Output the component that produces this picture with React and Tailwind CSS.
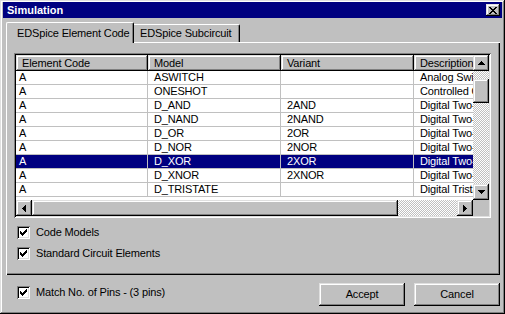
const raised = "shadow-[inset_-1px_-1px_#000000,inset_1px_1px_#dfdfdf,inset_-2px_-2px_#808080,inset_2px_2px_#ffffff]";
const dither = "bg-[image:repeating-conic-gradient(#c0c0c0_0_25%,#ffffff_0_50%)] bg-[length:2px_2px] bg-size-[2px_2px]";

const rows = [
    ["A", "ASWITCH", "", "Analog Switch"],
    ["A", "ONESHOT", "", "Controlled One-Shot"],
    ["A", "D_AND", "2AND", "Digital Two-Input AND"],
    ["A", "D_NAND", "2NAND", "Digital Two-Input NAND"],
    ["A", "D_OR", "2OR", "Digital Two-Input OR"],
    ["A", "D_NOR", "2NOR", "Digital Two-Input NOR"],
    ["A", "D_XOR", "2XOR", "Digital Two-Input XOR"],
    ["A", "D_XNOR", "2XNOR", "Digital Two-Input XNOR"],
    ["A", "D_TRISTATE", "", "Digital Tristate"],
];

const widths = ["w-[132px]", "w-[133px]", "w-[133px]", "w-[120px]"];
const headers = ["Element Code", "Model", "Variant", "Description"];

const Arrow = ({ dir }) => {
    const paths = {
        up: "M3 0h1v1h-1z M2 1h3v1h-3z M1 2h5v1h-5z M0 3h7v1h-7z",
        down: "M0 0h7v1h-7z M1 1h5v1h-5z M2 2h3v1h-3z M3 3h1v1h-1z",
        left: "M3 0h1v7h-1z M2 1h1v5h-1z M1 2h1v3h-1z M0 3h1v1h-1z",
        right: "M0 0h1v7h-1z M1 1h1v5h-1z M2 2h1v3h-1z M3 3h1v1h-1z",
    };
    const vertical = dir === "up" || dir === "down";
    return (
        <svg width={vertical ? 7 : 4} height={vertical ? 4 : 7} shapeRendering="crispEdges">
            <path d={paths[dir]} fill="#000" />
        </svg>
    );
};

const ScrollButton = ({ dir }) => (
    <div className={`w-[16px] h-[16px] shrink-0 bg-[#c0c0c0] flex items-center justify-center ${raised}`}>
        <Arrow dir={dir} />
    </div>
);

const Checkbox = ({ label }) => (
    <div className="flex items-center gap-[6px]">
        <div className="w-[13px] h-[13px] bg-white shadow-[inset_1px_1px_#808080,inset_-1px_-1px_#ffffff,inset_2px_2px_#000000,inset_-2px_-2px_#dfdfdf] flex items-center justify-center">
            <svg width="7" height="7" shapeRendering="crispEdges">
                <path
                    d="M0 2h1v3h-1z M1 3h1v3h-1z M2 4h1v3h-1z M3 3h1v3h-1z M4 2h1v3h-1z M5 1h1v3h-1z M6 0h1v3h-1z"
                    fill="#000"
                />
            </svg>
        </div>
        <span className="leading-[13px]">{label}</span>
    </div>
);

export default function App() {
    return (
        <div className={`w-[505px] h-[314px] bg-[#c0c0c0] overflow-hidden pt-[2px] px-[3px] text-[11px] tracking-[-0.15px] text-black font-['Liberation_Sans',Arial,sans-serif] ${raised}`}>
            {/* title bar */}
            <div className="h-[16px] bg-[#000080] flex items-center justify-between pl-[4px] pr-[2px]">
                <span className="text-white font-bold leading-[13px] tracking-normal">Simulation</span>
                <div className={`w-[14px] h-[12px] bg-[#c0c0c0] flex items-center justify-center ${raised}`}>
                    <svg width="8" height="7" shapeRendering="crispEdges">
                        <path
                            d="M0 0h2v1h-2z M6 0h2v1h-2z M1 1h2v1h-2z M5 1h2v1h-2z M2 2h4v1h-4z M3 3h2v1h-2z M2 4h4v1h-4z M1 5h2v1h-2z M5 5h2v1h-2z M0 6h2v1h-2z M6 6h2v1h-2z"
                            fill="#000"
                        />
                    </svg>
                </div>
            </div>

            <div className="pl-[3px] pr-[2px] mt-[4px]">
                {/* tabs */}
                <div className="h-[20px] flex items-end">
                    <div className="relative z-10 h-[21px] -mb-[1px] w-[128px] bg-[#c0c0c0] border-l border-t border-r border-l-white border-t-white border-r-black rounded-t-[2px] shadow-[inset_-1px_0_#808080] pl-[10px] pt-[4px] leading-[13px] whitespace-nowrap overflow-hidden">
                        EDSpice Element Code
                    </div>
                    <div className="h-[18px] w-[106px] bg-[#c0c0c0] border-t border-r border-t-white border-r-black rounded-tr-[2px] shadow-[inset_-1px_0_#808080] pl-[6px] pt-[2px] leading-[13px] whitespace-nowrap overflow-hidden">
                        EDSpice Subcircuit
                    </div>
                </div>

                {/* panel */}
                <div className="h-[233px] bg-[#c0c0c0] shadow-[inset_1px_1px_#ffffff,inset_-1px_-1px_#000000,inset_-2px_-2px_#808080] pl-[8px] pt-[11px]">
                    <div className="w-[477px] h-[165px] p-[2px] bg-white shadow-[inset_1px_1px_#808080,inset_-1px_-1px_#ffffff,inset_2px_2px_#000000,inset_-2px_-2px_#dfdfdf]">
                        <div className="flex h-[145px]">
                            <div className="w-[457px] overflow-hidden bg-white">
                                <div className="flex h-[16px] bg-[#c0c0c0]">
                                    {headers.map((h, i) => (
                                        <div
                                            key={h}
                                            className={`${widths[i]} shrink-0 h-[16px] pl-[6px] leading-[16px] whitespace-nowrap overflow-hidden ${raised}`}
                                        >
                                            {h}
                                        </div>
                                    ))}
                                </div>
                                {rows.map((r) => {
                                    const selected = r[1] === "D_XOR";
                                    return (
                                        <div
                                            key={r[1]}
                                            className={`flex h-[14px] border-b border-[#c0c0c0] ${selected ? "bg-[#000080] text-white" : ""}`}
                                        >
                                            {r.map((c, i) => (
                                                <div
                                                    key={i}
                                                    className={`${widths[i]} shrink-0 h-[13px] leading-[13px] border-r border-[#c0c0c0] whitespace-nowrap overflow-hidden ${i === 0 ? "pl-[3px]" : "pl-[6px]"}`}
                                                >
                                                    {c}
                                                </div>
                                            ))}
                                        </div>
                                    );
                                })}
                            </div>
                            <div className="w-[16px] flex flex-col">
                                <ScrollButton dir="up" />
                                <div className={`h-[8px] ${dither}`}></div>
                                <div className={`h-[24px] bg-[#c0c0c0] ${raised}`}></div>
                                <div className={`flex-1 ${dither}`}></div>
                                <ScrollButton dir="down" />
                            </div>
                        </div>
                        <div className="flex h-[16px]">
                            <div className="w-[457px] flex">
                                <ScrollButton dir="left" />
                                <div className={`w-[366px] h-[16px] bg-[#c0c0c0] ${raised}`}></div>
                                <div className={`flex-1 ${dither}`}></div>
                                <ScrollButton dir="right" />
                            </div>
                            <div className="w-[16px] bg-[#c0c0c0]"></div>
                        </div>
                    </div>

                    <div className="ml-[3px] mt-[8px]">
                        <Checkbox label="Code Models" />
                    </div>
                    <div className="ml-[3px] mt-[8px]">
                        <Checkbox label="Standard Circuit Elements" />
                    </div>
                </div>

                {/* bottom row */}
                <div className="flex items-start mt-[8px]">
                    <div className="ml-[11px] mt-[3px]">
                        <Checkbox label="Match No. of Pins - (3 pins)" />
                    </div>
                    <div className="ml-auto flex gap-[9px]">
                        <button className={`w-[86px] h-[23px] bg-[#c0c0c0] ${raised}`}>Accept</button>
                        <button className={`w-[86px] h-[23px] bg-[#c0c0c0] ${raised}`}>Cancel</button>
                    </div>
                </div>
            </div>
        </div>
    );
}
